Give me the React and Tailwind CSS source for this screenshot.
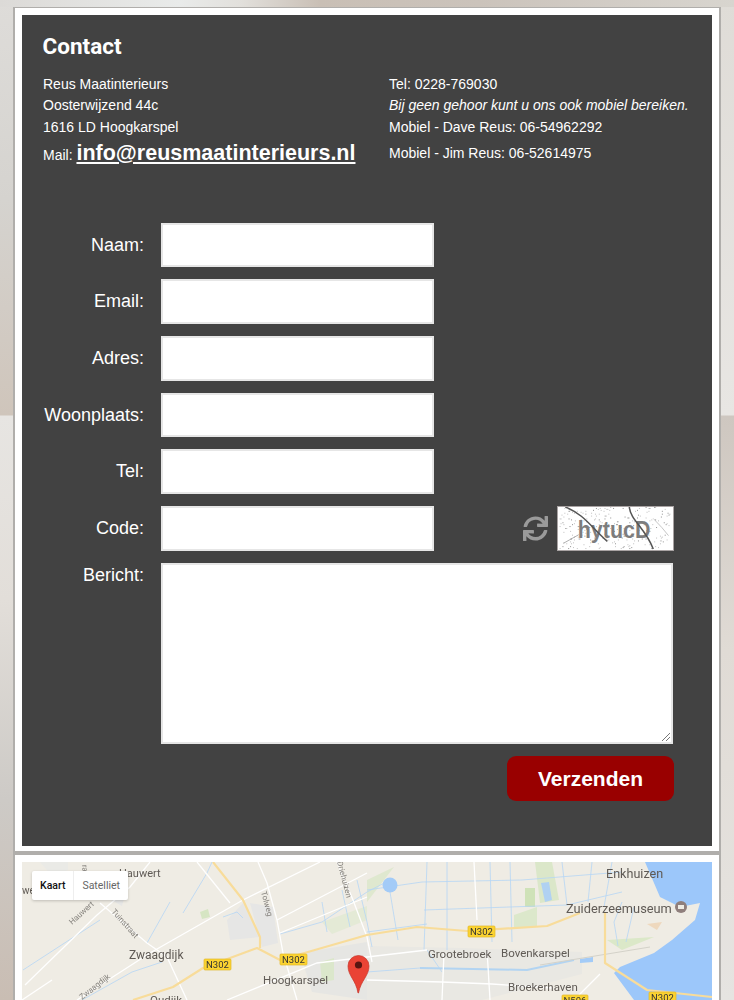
import React from "react";
import { FaSync } from "react-icons/fa";

const fields = ["Naam:", "Email:", "Adres:", "Woonplaats:", "Tel:"];
const inputCls = "block h-[44.6px] w-[273px] bg-white border-2 border-solid border-[#e6e6e6] outline-none";
const labelCls = "w-[102px] text-right text-[18px] leading-[21px] text-white";

function dots() {
  const out = [];
  let s = 17;
  for (let i = 0; i < 230; i++) {
    s = (s * 137 + 71) % 1009;
    const x = (s * 7) % 116;
    s = (s * 137 + 71) % 1009;
    const y = (s * 3) % 44;
    out.push(<rect key={i} x={x} y={y} width="1" height="1" fill={i % 3 ? "#bbb" : "#888"} />);
  }
  return out;
}

function Captcha() {
  return (
    <svg width="117" height="45" viewBox="0 0 117 45" className="block border border-solid border-[#a9a3a3] bg-white box-border">
      {dots()}
      <text x="19" y="32" fontFamily="'Liberation Sans', sans-serif" fontSize="25" fontWeight="700" fill="#7d7d7d" textLength="76" lengthAdjust="spacingAndGlyphs">hytucD</text>
      <path d="M6 0 C 26 8, 32 20, 50 36" stroke="#555" strokeWidth="1.6" fill="none" />
      <path d="M73 0 C 74 14, 90 22, 98 44" stroke="#555" strokeWidth="1.6" fill="none" />
      <path d="M4 38 L 20 29" stroke="#888" strokeWidth="0.7" fill="none" />
      <path d="M98 12 Q 108 22 114 30" stroke="#aaa" strokeWidth="0.7" fill="none" />
    </svg>
  );
}

const M = { fontFamily: "Roboto, sans-serif" };

function Shield({ x, y, w = 27, label }) {
  return (
    <g>
      <rect x={x} y={y} width={w} height="11" rx="1" fill="#fbd331" stroke="#e2b92a" strokeWidth="0.7" />
      <text x={x + w / 2} y={y + 9} textAnchor="middle" fontSize="9.5" fill="#333" style={M}>{label}</text>
    </g>
  );
}

function Place({ x, y, size = 11.5, children, color = "#5f5a55", anchor = "start" }) {
  return <text x={x} y={y} fontSize={size} fill={color} textAnchor={anchor} style={M}>{children}</text>;
}

function MapCanvas() {
  return (
    <svg width="690" height="138" viewBox="0 0 690 138" className="block blur-[0.4px]">
      <rect width="690" height="138" fill="#efece4" />
      {/* built-up areas */}
      <path d="M205 58 L221 41 L238 75 L208 78Z" fill="#e6e6e5" />
      <path d="M228 41 L251 45 L256 81 L240 85Z" fill="#e6e6e5" />
      <path d="M278 91 L345 80 L345 138 L290 130Z" fill="#e6e6e3" />
      <path d="M345 84 L440 86 L560 90 L560 112 L460 138 L345 138Z" fill="#e9e8e3" />
      <path d="M18 0 L46 0 L46 8 L30 14Z" fill="#eaeae6" />
      <path d="M82 34 L105 25 L100 44Z" fill="#e6e6e5" />
      {/* green patches */}
      <path d="M513 0 L530 0 L537 38 L518 41Z" fill="#dbe7c9" />
      <path d="M503 26 L513 26 L513 45 L503 45Z" fill="#cfe2b8" />
      <path d="M492 53 L515 45 L515 65 L492 65Z" fill="#dce8cb" />
      <path d="M300 60 L345 44 L345 58 L310 72Z" fill="#e4ead6" />
      <path d="M345 18 L372 5 L345 40Z" fill="#dfe8cf" />
      <path d="M178 50 L186 47 L188 55 L180 57Z" fill="#d6e5c3" />
      <path d="M585 78 L632 75 L600 88Z" fill="#dbe8c8" />
      <path d="M625 62 L640 60 L635 68Z" fill="#eed8bd" />
      <path d="M298 100 L312 96 L312 118 L300 120Z" fill="#dbe7cb" />
      {/* minor water */}
      <g stroke="#b5d6f5" strokeWidth="0.8" fill="none">
        <path d="M1 108 L78 58" />
        <path d="M125 81 L148 40 M161 51 L185 11 L190 0" />
        <path d="M60 138 L110 110 L140 100" />
        <path d="M201 55 L215 50 L221 56" />
        <path d="M258 72 L300 60 L345 30 L368 18" />
        <path d="M300 40 L305 70 M320 28 L328 65 M335 18 L345 60" />
        <path d="M345 60 L350 85 M368 30 L376 78 M405 0 L402 88 M425 0 L425 88 M468 0 L470 80 M488 0 L490 80 M540 0 L545 43 M570 0 L566 40 M590 0 L582 45" />
        <path d="M402 48 L545 43 L600 30" />
        <path d="M345 28 L400 20 L500 18 L600 10" />
        <path d="M345 110 L398 106" />
        <path d="M600 40 L592 60 L596 84 M612 45 L604 80" />
        <path d="M345 70 L405 62 M405 88 L420 110" />
      </g>
      <path d="M398 106 L505 108 L552 98" stroke="#b2d4f2" strokeWidth="2" fill="none" />
      <circle cx="368" cy="23" r="7.5" fill="#a3cbf7" />
      <path d="M519 21 L527 20 L530 38 L523 40Z" fill="#b0d1f2" />
      <path d="M558 97 L571 95 L571 100 L558 101Z" fill="#a3cbf7" />
      {/* white roads */}
      <g stroke="#ffffff" strokeWidth="1.3" fill="none">
        <path d="M3 123 L75 53 L108 25 L128 0" />
        <path d="M78 41 L125 81 L145 95 L165 138" />
        <path d="M55 138 L128 91 L221 38 L298 0" />
        <path d="M175 0 L208 41" />
        <path d="M236 0 L245 21 L255 58 L261 91 L275 138" />
        <path d="M315 0 L331 38 L345 75 L350 100" />
        <path d="M255 58 L345 11" />
        <path d="M258 71 L345 35" />
        <path d="M205 138 L295 101 L345 95 L405 88" />
        <path d="M422 91 L420 138" />
        <path d="M465 88 L468 138" />
        <path d="M452 0 L455 58" />
        <path d="M345 118 L420 120 L470 122 L530 126" />
        <path d="M552 138 L578 112" />
        <path d="M0 138 L30 118" />
      </g>
      <path d="M518 103 L628 85" stroke="#d4d2c9" strokeWidth="1" fill="none" />
      {/* sea */}
      <path d="M623 0 L638 35 L658 45 L678 41 L673 58 L650 78 L632 91 L598 105 L592 111 L612 138 L690 138 L690 0Z" fill="#9cc7fa" />
      {/* yellow roads */}
      <g stroke="#f8dc9a" strokeWidth="2.2" fill="none" strokeLinejoin="round">
        <path d="M191 0 L221 38 L238 75 L238 86" />
        <path d="M111 138 L151 125 L181 106 L235 86 L258 98 L345 73 L395 65 L445 69 L525 64 L558 51" />
        <path d="M583 50 L583 101 L625 128 L690 135" />
      </g>
      <Shield x={182} y={97} label="N302" />
      <Shield x={258} y={92} label="N302" />
      <Shield x={446} y={64} label="N302" />
      <Shield x={627} y={130} label="N302" />
      <Shield x={540} y={133} w={26} label="N506" />

      <Place x={97} y={15} size={11}>Hauwert</Place>
      <Place x={0} y={32} size={10}>we</Place>
      <Place x={107} y={97} size={12}>Zwaagdijk</Place>
      <Place x={241} y={122} size={11.5}>Hoogkarspel</Place>
      <Place x={128} y={142} size={11.5}>Oudijk</Place>
      <Place x={406} y={96} size={11.5}>Grootebroek</Place>
      <Place x={479} y={95} size={11.5}>Bovenkarspel</Place>
      <Place x={486} y={129} size={11.5}>Broekerhaven</Place>
      <Place x={584} y={16} size={12.6}>Enkhuizen</Place>
      <Place x={544} y={51} size={12.8}>Zuiderzeemuseum</Place>
      <circle cx="659" cy="45" r="6" fill="#8f7f7c" />
      <rect x="656" y="43" width="6" height="4" fill="#efece4" />
      <g fontSize="8" fill="#85827d" style={M}>
        <text transform="translate(50 63) rotate(-42)">Hauwert</text>
        <text transform="translate(89 50) rotate(48)">Tuinstraat</text>
        <text transform="translate(60 138) rotate(-38)">Zwaagdijk</text>
        <text transform="translate(239 30) rotate(75)">Tolweg</text>
        <text transform="translate(315 0) rotate(75)">Driehuizen</text>
        <text transform="translate(60 3) rotate(85)">raat</text>
      </g>
      {/* pin */}
      <path d="M336 131 C 334 118 326 114 326 104 A 10.5 10.5 0 1 1 347 104 C 347 114 339 118 336.5 131Z" fill="#ea4335" stroke="#c5352a" strokeWidth="0.7" />
      <circle cx="336.5" cy="103" r="3.6" fill="#5a1511" />
    </svg>
  );
}

export default function App() {
  return (
    <div className="relative h-[1000px] w-[734px] overflow-hidden pt-[7px] pl-[13px] font-['Liberation_Sans',Arial,sans-serif] [background:linear-gradient(90deg,#dcdad7,#e9ebea_180px,#e2e0dc_240px,#c9bfb5_320px,#cbc3bb_480px,#d8d5cf_734px)_0_0/734px_7px_no-repeat,linear-gradient(#dedcd9,#d5d3cf_200px,#cfc5bb_415px,#e7e5e2_416px,#e2ded9_600px,#cdcac6_800px,#c9bdb3_1000px)_0_0/14px_1000px_no-repeat,linear-gradient(#dfdcd7,#e8e6e3_415px,#cec7c0_416px,#e0dbd5_650px,#e6e4e1_1000px)_720px_0/14px_1000px_no-repeat,#ffffff]">
      <div className="h-[846px] w-[708px] border-2 border-t-[1px] border-solid border-[#b0aeab] bg-white pt-[7px] pl-[7px]">
        <div className="h-[831px] w-[690px] bg-[#424242] pt-[18px] pl-[20px] text-white">
          <h1 className="ml-[0.5px] h-[26px] text-[22.5px] font-bold leading-[26px] font-['Roboto',sans-serif]">Contact</h1>
          <div className="mt-[6px] flex h-[157.8px] text-[14px]">
            <div className="w-[347px] pl-px">
              <p className="mt-[8.5px] leading-[21.5px]">Reus Maatinterieurs</p>
              <p className="leading-[21.5px]">Oosterwijzend 44c</p>
              <p className="leading-[21.5px]">1616 LD Hoogkarspel</p>
              <p className="mt-[4px] leading-[22px]">
                <span className="text-[14px]">Mail: </span>
                <a className="text-[21.5px] font-bold underline">info@reusmaatinterieurs.nl</a>
              </p>
            </div>
            <div>
              <p className="mt-[8.5px] leading-[21.5px]">Tel: 0228-769030</p>
              <p className="italic leading-[21.5px]">Bij geen gehoor kunt u ons ook mobiel bereiken.</p>
              <p className="leading-[21.5px]">Mobiel - Dave Reus: 06-54962292</p>
              <p className="mt-[5px] leading-[21.5px]">Mobiel - Jim Reus: 06-52614975</p>
            </div>
          </div>
          <div className="flex flex-col gap-[12.05px]">
            {fields.map((f) => (
              <div key={f} className="flex h-[44.6px] items-center gap-[17px]">
                <label className={labelCls}>{f}</label>
                <div className={inputCls}></div>
              </div>
            ))}
            <div className="flex h-[44.6px] items-center gap-[17px]">
              <label className={labelCls}>Code:</label>
              <div className={inputCls}></div>
              <FaSync className="ml-[72px] text-[25px] text-[#9a9a9a]" />
              <div className="ml-[-8px]"><Captcha /></div>
            </div>
            <div className="flex gap-[17px]">
              <label className={`${labelCls} pt-[2px]`}>Bericht:</label>
              <div className="relative h-[181.3px] w-[512px] border-2 border-solid border-[#e6e6e6] bg-white">
                <svg width="10" height="10" viewBox="0 0 10 10" className="absolute right-0 bottom-0">
                  <path d="M1 9 L9 1 M5 9 L9 5" stroke="#777" strokeWidth="1" />
                </svg>
              </div>
            </div>
          </div>
          <div className="mt-[12px] ml-[465px] flex h-[45px] w-[167px] items-center justify-center rounded-[9px] bg-[#990000] pt-px text-[21px] font-bold">
            Verzenden
          </div>
        </div>
      </div>
      <div className="relative h-[200px] w-[708px] border-x-2 border-t-2 border-solid border-[#b0aeab] bg-white pt-[7px] pl-[7px]">
        <div className="relative h-[138px] w-[690px] overflow-hidden">
          <MapCanvas />
          <div className="absolute top-[9px] left-[10px] flex h-[29px] items-center rounded-[2px] bg-white text-[10.5px] font-['Roboto',sans-serif] shadow-[0_1px_3px_rgba(0,0,0,0.2)]">
            <span className="flex h-full items-center px-[8px] font-medium text-[#111]">Kaart</span>
            <span className="flex h-full items-center border-l border-solid border-[#eeeeee] px-[8px] text-[#666]">Satelliet</span>
          </div>
        </div>
      </div>
    </div>
  );
}
